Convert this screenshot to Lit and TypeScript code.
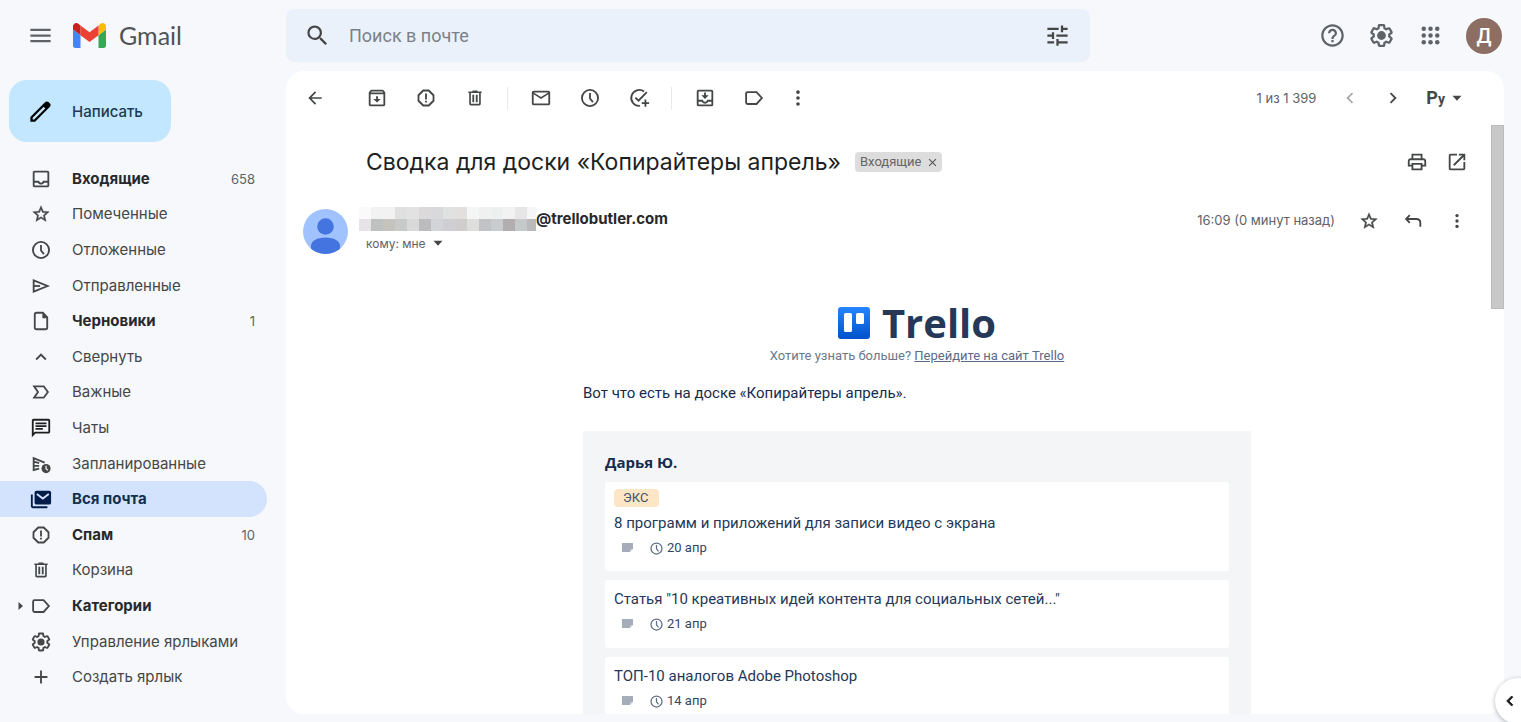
import { LitElement, html, svg, css, nothing, type TemplateResult, type SVGTemplateResult } from "lit";
import { customElement, state } from "lit/decorators.js";
import { classMap } from "lit/directives/class-map.js";

const line = (d: string, w = 2) => svg`<path d=${d} fill="none" stroke="currentColor" stroke-width=${w}></path>`;
const fill = (d: string) => svg`<path d=${d} fill="currentColor"></path>`;
const dot = (x: number, y: number, r: number) => svg`<circle cx=${x} cy=${y} r=${r} fill="currentColor"></circle>`;

const GEAR =
  "M13.85 22.25h-3.7c-.74 0-1.36-.54-1.45-1.27l-.27-1.89c-.27-.14-.53-.29-.79-.46l-1.8.72c-.7.26-1.47-.03-1.81-.65L2.2 15.53c-.35-.66-.2-1.44.36-1.88l1.53-1.19c-.01-.15-.02-.3-.02-.46 0-.15.01-.31.02-.46l-1.52-1.19c-.59-.45-.74-1.26-.37-1.88l1.85-3.19c.34-.62 1.11-.9 1.79-.63l1.81.73c.26-.17.52-.32.78-.46l.27-1.91c.09-.7.71-1.25 1.44-1.25h3.7c.74 0 1.36.54 1.45 1.27l.27 1.89c.27.14.53.29.79.46l1.8-.72c.71-.26 1.48.03 1.82.65l1.84 3.18c.36.66.2 1.44-.36 1.88l-1.52 1.19c.01.15.02.3.02.46s-.01.31-.02.46l1.52 1.19c.56.45.72 1.23.37 1.86l-1.86 3.22c-.34.62-1.11.9-1.8.63l-1.8-.72c-.26.17-.52.32-.78.46l-.27 1.91c-.1.68-.72 1.22-1.46 1.22zm-3.23-2h2.76l.37-2.55.53-.22c.44-.18.88-.44 1.34-.78l.45-.34 2.38.96 1.38-2.4-2.03-1.58.07-.56c.03-.26.06-.51.06-.78s-.03-.53-.06-.78l-.07-.56 2.03-1.58-1.39-2.4-2.39.96-.45-.35c-.42-.32-.87-.58-1.33-.77l-.52-.22-.37-2.55h-2.76l-.37 2.55-.53.21c-.44.19-.88.44-1.34.79l-.45.33-2.38-.95-1.39 2.39 2.03 1.58-.07.56a7 7 0 0 0-.06.79c0 .26.02.53.06.78l.07.56-2.03 1.58 1.38 2.4 2.39-.96.45.35c.43.33.86.58 1.33.77l.53.22z";
const STAR =
  "M22 9.24l-7.19-.62L12 2 9.19 8.63 2 9.24l5.46 4.73L5.82 21 12 17.27 18.18 21l-1.63-7.03L22 9.24zM12 15.4l-3.76 2.27 1-4.28-3.32-2.88 4.38-.38L12 6.1l1.71 4.04 4.38.38-3.32 2.88 1 4.28L12 15.4z";

const icons: Record<string, SVGTemplateResult> = {
  menu: fill("M3 18h18v-2H3v2zm0-5h18v-2H3v2zm0-7v2h18V6H3z"),
  search: fill("M15.5 14h-.79l-.28-.27A6.471 6.471 0 0 0 16 9.5 6.5 6.5 0 1 0 9.5 16c1.61 0 3.09-.59 4.23-1.57l.27.28v.79l5 4.99L20.49 19l-4.99-5zm-6 0C7.01 14 5 11.99 5 9.5S7.01 5 9.5 5 14 7.01 14 9.5 11.99 14 9.5 14z"),
  tune: fill("M3 17v2h6v-2H3zM3 5v2h10V5H3zm10 16v-2h8v-2h-8v-2h-2v6h2zM7 9v2H3v2h4v2h2V9H7zm14 4v-2H11v2h10zm-6-4h2V7h4V5h-4V3h-2v6z"),
  help: fill("M11 18h2v-2h-2v2zm1-16C6.48 2 2 6.48 2 12s4.48 10 10 10 10-4.48 10-10S17.52 2 12 2zm0 18c-4.41 0-8-3.59-8-8s3.59-8 8-8 8 3.59 8 8-3.59 8-8 8zm0-14c-2.21 0-4 1.79-4 4h2c0-1.1.9-2 2-2s2 .9 2 2c0 2-3 1.75-3 5h2c0-2.25 3-2.5 3-5 0-2.21-1.79-4-4-4z"),
  gear: svg`${fill(GEAR)}${dot(12, 12, 3.9)}`,
  apps: svg`${[6, 12, 18].map((y) => [6, 12, 18].map((x) => dot(x, y, 2)))}`,
  pencil: fill("M20.41 4.94l-1.35-1.35c-.78-.78-2.05-.78-2.83 0L3 16.82V21h4.18L20.41 7.77c.79-.78.79-2.05 0-2.83zm-14 14.12L5 19v-1.36l9.82-9.82 1.41 1.41-9.82 9.83z"),
  inbox: fill("M19 3H5c-1.1 0-2 .9-2 2v14c0 1.1.89 2 2 2h14c1.1 0 2-.9 2-2V5c0-1.1-.9-2-2-2zm0 16H5v-3h3.56c.69 1.19 1.97 2 3.45 2s2.75-.81 3.45-2H19v3zm0-5h-4.99c0 1.1-.9 2-2 2s-2-.9-2-2H5V5h14v9z"),
  star: svg`<path transform="translate(1.2 1.2) scale(.9)" d=${STAR} fill="currentColor" stroke="currentColor" stroke-width=".5"></path>`,
  clock: svg`<circle cx="12" cy="12" r="8.8" fill="none" stroke="currentColor" stroke-width="2"></circle>${line("M12 6.5v6l3.2 4")}`,
  send: svg`${line("M4 5.800v12.400L19.200 12z")}${line("M4 12h7")}`,
  draft: svg`${line("M14 3H7.200C6 3 5.200 3.800 5.200 5v14c0 1.200.8 2 2 2h9.600c1.200 0 2-.8 2-2V8z")}${fill("M13.500 3v6h6z")}`,
  up: fill("M12 8l-6 6 1.41 1.41L12 10.83l4.59 4.58L18 14z"),
  important: line("M4.500 5.800h10.500l4.500 6.200-4.500 6.200H4.500L8.700 12z"),
  chat: fill("M4 4h16v12H5.17L4 17.17V4m0-2c-1.1 0-1.99.9-1.99 2L2 22l4-4h14c1.1 0 2-.9 2-2V4c0-1.1-.9-2-2-2H4zm2 10h8v2H6v-2zm0-3h12v2H6V9zm0-3h12v2H6V6z"),
  scheduled: svg`${line("M10 17l-6 1.500V5.500l12 5M4 9.500l6 1.500M4 14h6")}${dot(17.5, 17, 5)}<path d="M17.500 14v3.200l2 1.600" fill="none" stroke="#f6f8fc" stroke-width="1.300"></path>`,
  allmail: svg`${fill("M3 7H1v13c0 1.100.9 2 2 2h16v-2H3z")}<rect x="5" y="3" width="18" height="15" rx="2" fill="currentColor"></rect><path d="M7.500 6.500l6.500 5 6.500-5" fill="none" stroke="#d3e3fd" stroke-width="2"></path>`,
  spam: svg`${line("M9 3.800h6L20.200 9v6L15 20.200H9L3.800 15V9z")}${fill("M11 7h2v6.500h-2zM11 15h2v2h-2z")}`,
  trash: svg`<g transform="translate(1.200 1.200) scale(.9)">${fill("M15 4V3H9v1H4v2h1v13c0 1.100.9 2 2 2h10c1.100 0 2-.9 2-2V6h1V4h-5zm2 15H7V6h10v13zM8.800 8h2.200v9H8.800zm4.200 0h2.200v9H13z")}</g>`,
  label: line("M5 5.500h9.800L20.600 12l-5.800 6.500H5c-.8 0-1.600-.6-1.600-1.500V7c0-.9.8-1.500 1.600-1.500z"),
  plus: fill("M19 13h-6v6h-2v-6H5v-2h6V5h2v6h6v2z"),
  back: fill("M20 11H7.830l5.590-5.590L12 4l-8 8 8 8 1.410-1.410L7.830 13H20v-2z"),
  archive: fill("M20.54 5.23l-1.39-1.68C18.88 3.21 18.47 3 18 3H6c-.47 0-.88.21-1.16.55L3.46 5.23C3.17 5.57 3 6.02 3 6.5V19c0 1.1.9 2 2 2h14c1.1 0 2-.9 2-2V6.5c0-.48-.17-.93-.46-1.27zM6.24 5h11.52l.83 1H5.42l.82-1zM5 19V8h14v11H5zm8-9h-2v3H8l4 4 4-4h-3v-3z"),
  mail: fill("M22 6c0-1.1-.9-2-2-2H4c-1.1 0-2 .9-2 2v12c0 1.1.9 2 2 2h16c1.1 0 2-.9 2-2V6zm-2 0l-8 5-8-5h16zm0 12H4V8l8 5 8-5v10z"),
  task: svg`${line("M17.500 5A8.700 8.700 0 1 0 13 20.600M8 11.500l3.500 3.500L20.500 5.500")}${line("M19 13.500v8M15 17.500h8")}`,
  move: svg`${line("M5 4h14c.6 0 1 .4 1 1v14c0 .6-.4 1-1 1H5c-.6 0-1-.4-1-1V5c0-.6.400-1 1-1zM4 15h5c.5 1.500 1.500 2.200 3 2.200s2.500-.7 3-2.200h5")}${fill("M11 6h2v3h3l-4 4-4-4h3z")}`,
  more: svg`${dot(12, 5.5, 2)}${dot(12, 12, 2)}${dot(12, 18.5, 2)}`,
  left: fill("M15.41 7.41L14 6l-6 6 6 6 1.41-1.41L10.830 12z"),
  right: fill("M8.59 16.590L10 18l6-6-6-6-1.410 1.410L13.170 12z"),
  print: fill("M19 8h-1V3H6v5H5c-1.66 0-3 1.34-3 3v6h4v4h12v-4h4v-6c0-1.66-1.34-3-3-3zM8 5h8v3H8V5zm8 12v2H8v-4h8v2zm2-2v-2H6v2H4v-4c0-.55.45-1 1-1h14c.55 0 1 .45 1 1v4h-2z"),
  open: fill("M19 19H5V5h7V3H5a2 2 0 0 0-2 2v14a2 2 0 0 0 2 2h14c1.1 0 2-.9 2-2v-7h-2v7zM14 3v2h3.59l-9.83 9.83 1.41 1.41L19 6.41V10h2V3h-7z"),
  reply: line("M8.500 5.500L4.500 9.800l4 4.200M4.500 9.800h11c2.800 0 4.500 1.700 4.500 4.500v4"),
  down: fill("M3 7.500h18l-9 10z"),
  caret: fill("M7 4v16l9-8z"),
  close: line("M3 3l18 18M21 3L3 21", 3),
};

const icon = (name: string, size: "s" | "m" | "l" | "xs" = "m"): TemplateResult =>
  html`<svg class="i ${size}" viewBox="0 0 24 24" aria-hidden="true">${icons[name]}</svg>`;

interface Folder { id: string; name: string; icon: string; count?: string; bold?: boolean; caret?: boolean; }

const folders: Folder[] = [
  { id: "inbox", name: "Входящие", icon: "inbox", count: "658", bold: true },
  { id: "starred", name: "Помеченные", icon: "star" },
  { id: "snoozed", name: "Отложенные", icon: "clock" },
  { id: "sent", name: "Отправленные", icon: "send" },
  { id: "drafts", name: "Черновики", icon: "draft", count: "1", bold: true },
  { id: "less", name: "Свернуть", icon: "up" },
  { id: "important", name: "Важные", icon: "important" },
  { id: "chats", name: "Чаты", icon: "chat" },
  { id: "scheduled", name: "Запланированные", icon: "scheduled" },
  { id: "all", name: "Вся почта", icon: "allmail" },
  { id: "spam", name: "Спам", icon: "spam", count: "10", bold: true },
  { id: "trash", name: "Корзина", icon: "trash" },
  { id: "categories", name: "Категории", icon: "label", bold: true, caret: true },
  { id: "manage", name: "Управление ярлыками", icon: "gear" },
  { id: "create", name: "Создать ярлык", icon: "plus" },
];

const cards = [
  { tag: "ЭКС", title: "8 программ и приложений для записи видео с экрана", date: "20 апр" },
  { title: "Статья \"10 креативных идей контента для социальных сетей...\"", date: "21 апр" },
  { title: "ТОП-10 аналогов Adobe Photoshop", date: "14 апр" },
];

const mosaic = [
  ["#fafafa", "#f2f2f2", "#f2f2f2", "#e0e0e0", "#e2e2e2", "#dbd9da", "#d9d9dc", "#e0e2e1", "#e3dfdf", "#f4f5f5", "#f0f0f1", "#eeefef", "#f2f2f2", "#e6e6e6", "#f6f6f6"],
  ["#e6e4e6", "#bfc1c0", "#c5c3bd", "#c8caca", "#d9d9d9", "#bcbbbd", "#d3d4da", "#cfcfd3", "#d0cecd", "#dededc", "#c2c3c6", "#c9cccc", "#b2adaf", "#c5c9c9", "#bababa"],
];

const base = css`
  :host { box-sizing: border-box; font-family: Inter, Roboto, sans-serif; color: #444746; }
  *, *::before { box-sizing: border-box; }
  button { font: inherit; color: inherit; background: none; border: 0; padding: 0; margin: 0; cursor: pointer;
    display: flex; align-items: center; justify-content: center; }
  .i { display: block; flex: none; }
  .xs { width: 12px; height: 12px; }
  .s { width: 20px; height: 20px; }
  .m { width: 22px; height: 22px; }
  .l { width: 27px; height: 27px; }
`;

@customElement("mail-header")
export class MailHeader extends LitElement {
  static styles = [base, css`
    :host { display: flex; align-items: center; height: 71px; padding-right: 19px; color: #5f6368; }
    .brand { flex: none; display: flex; align-items: center; width: 286px; padding-left: 27px; }
    .logo { display: flex; align-items: center; gap: 13px; margin-left: 19px; text-decoration: none;
      color: #505357; font: 25px/30px Lato, Roboto, sans-serif; }
    .logo span { padding-bottom: 2px; }
    .logo svg { width: 33px; height: 25px; }
    .search { flex: 0 1 804px; min-width: 0; display: flex; align-items: center; gap: 18px; height: 53px;
      padding: 0 19px 0 18px; border-radius: 8px; background: #eaf1fb; color: #444746; }
    .search input { flex: 1; min-width: 0; border: 0; padding: 0; background: none; outline: 0;
      font: 18px/24px Roboto, sans-serif; color: #202124; }
    .search input::placeholder { color: #7c8086; opacity: 1; }
    .tools { display: flex; align-items: center; margin-left: auto; }
    .tools button { width: 49px; height: 49px; }
    .tools .avatar { width: 36px; height: 36px; margin-left: 11px; border-radius: 50%; background: #8d6e63;
      color: #fff; font: 500 20px/36px Roboto, sans-serif; }
  `];

  render() {
    return html`
      <div class="brand">
        <button aria-label="Главное меню">${icon("menu", "l")}</button>
        <a class="logo" href="#">
          <svg viewBox="52 42 88 66" aria-hidden="true">
            <path fill="#4285f4" d="M58 108h14V74L52 59v43c0 3.32 2.69 6 6 6"></path>
            <path fill="#34a853" d="M120 108h14c3.32 0 6-2.69 6-6V59l-20 15"></path>
            <path fill="#fbbc04" d="M120 48v26l20-15v-8c0-7.42-8.47-11.65-14.4-7.2"></path>
            <path fill="#ea4335" d="M72 74V48l24 18 24-18v26L96 92"></path>
            <path fill="#c5221f" d="M52 51v8l20 15V48l-5.6-4.2c-5.94-4.45-14.4-.22-14.4 7.2"></path>
          </svg>
          <span>Gmail</span>
        </a>
      </div>
      <form class="search" role="search">
        <button type="button" aria-label="Найти">${icon("search", "l")}</button>
        <input type="text" aria-label="Поиск в почте" placeholder="Поиск в почте" />
        <button type="button" aria-label="Параметры поиска">${icon("tune", "l")}</button>
      </form>
      <div class="tools">
        <button aria-label="Справка">${icon("help", "l")}</button>
        <button aria-label="Настройки">${icon("gear", "l")}</button>
        <button aria-label="Приложения">${icon("apps", "l")}</button>
        <button class="avatar" aria-label="Аккаунт">Д</button>
      </div>`;
  }
}

@customElement("mail-sidebar")
export class MailSidebar extends LitElement {
  static styles = [base, css`
    :host { display: block; padding: 9px 19px 0 0; }
    .compose { height: 62px; margin: 0 0 19px 9px; padding: 0 28px 0 18px; gap: 18px; border-radius: 18px;
      background: #c2e7ff; color: #001d35; font-size: 15px; font-weight: 500; }
    .compose span { color: #1f3a50; }
    .compose svg { color: #000; }
    nav { display: grid; grid-auto-rows: 1fr; min-height: 534px; }
    a { display: grid; grid-template-columns: 30px 22px 1fr auto; align-items: center; padding-right: 12px;
      border-radius: 0 18px 18px 0; color: #444746; text-decoration: none; font-size: 15px; line-height: 20px; }
    .slot { display: flex; justify-content: flex-end; padding-right: 3px; }
    .name { padding-left: 20px; white-space: nowrap; }
    .count { font-size: 13px; font-weight: 400; color: #5f6368; }
    .bold { font-weight: 700; color: #27282b; }
    .bold svg { color: #444746; }
    .active { background: #d3e3fd; font-weight: 700; color: #12304d; }
    .active svg { color: #001d49; }
    .dark svg { color: #1f1f1f; }
  `];

  @state() private selected = "all";

  render() {
    return html`
      <button class="compose">${icon("pencil", "l")}<span>Написать</span></button>
      <nav aria-label="Папки">
        ${folders.map((f) => html`
          <a href="#${f.id}" class=${classMap({ bold: !!f.bold, active: f.id === this.selected, dark: f.id === "chats" })}
            @click=${() => (this.selected = f.id)}>
            <span class="slot">${f.caret ? icon("caret", "xs") : nothing}</span>
            ${icon(f.icon)}
            <span class="name">${f.name}</span>
            ${f.count ? html`<span class="count">${f.count}</span>` : nothing}
          </a>`)}
      </nav>`;
  }
}

@customElement("mail-toolbar")
export class MailToolbar extends LitElement {
  static styles = [base, css`
    :host { flex: none; display: flex; align-items: center; height: 54px; padding: 0 41px 0 9px; }
    button { width: 49px; height: 40px; }
    .back { width: 40px; margin-right: 17px; }
    .more { width: 40px; }
    hr { width: 1px; height: 23px; margin: 0 8px; border: 0; background: #e8eaed; }
    .page { margin-left: auto; padding-right: 12px; font-size: 13px; color: #5f6368; white-space: nowrap; }
    .nav { width: 43px; }
    .nav[disabled] { color: #a8aaac; }
    .input { width: auto; padding-left: 12px; gap: 6px; }
    .lang { font: 700 18px/24px Roboto, sans-serif; }
    .lang small { font-size: 14px; }
  `];

  render() {
    const b = (name: string, label: string, cls = "") =>
      html`<button class=${cls} aria-label=${label}>${icon(name, cls === "back" ? "s" : "m")}</button>`;
    return html`
      ${b("back", "Назад", "back")}
      ${b("archive", "Архивировать")}${b("spam", "В спам!")}${b("trash", "Удалить")}
      <hr />
      ${b("mail", "Отметить как непрочитанное")}${b("clock", "Отложить")}${b("task", "Добавить в задачи")}
      <hr />
      ${b("move", "Переместить")}${b("label", "Ярлыки")}${b("more", "Ещё", "more")}
      <span class="page">1 из 1 399</span>
      <button class="nav" disabled aria-label="Новее">${icon("left")}</button>
      <button class="nav" aria-label="Старее">${icon("right")}</button>
      <button class="input" aria-label="Способ ввода"><span class="lang">Р<small>у</small></span>${icon("down", "xs")}</button>`;
  }
}

@customElement("trello-digest")
export class TrelloDigest extends LitElement {
  static styles = [base, css`
    :host { display: block; max-width: 668px; margin: 0 auto; padding-top: 52px;
      font-family: Roboto, "Open Sans", sans-serif; color: #172b4d; }
    .brand { display: flex; align-items: center; justify-content: center; gap: 12px; height: 32px;
      font: 700 40px/32px "Open Sans", sans-serif; color: #253858; }
    .brand svg { width: 32px; height: 32px; }
    .more { margin: 7px 0 16px; text-align: center; font-size: 13px; line-height: 20px; color: #6b778c; }
    .more a { color: #5a6b87; }
    .intro { margin: 0 0 27px; font-size: 15px; line-height: 22px; }
    .board { padding: 20px 22px; background: #f4f5f7; display: flex; flex-direction: column; gap: 9px; }
    h2 { margin: 0; font: 700 15px/22px "Open Sans", sans-serif; }
    .card { min-height: 68px; padding: 7px 9px 13px; border-radius: 3px; background: #fff; }
    .tag { display: table; margin-bottom: 4px; padding: 0 11px 0 9px; border-radius: 4px; background: #fce6c6;
      font-size: 13px; line-height: 18px; color: #42526e; }
    h3 { margin: 0; font-weight: 400; font-size: 15px; line-height: 24px; color: #253858; }
    .meta { display: flex; align-items: center; margin-top: 3px; padding-left: 8px; font-size: 13px; line-height: 20px; color: #344563; }
    .note { width: 11px; height: 10px; margin-right: 16px; }
    .due { width: 15px; height: 15px; margin-right: 3px; color: #5e6c84; }
  `];

  render() {
    return html`
      <div class="brand">
        <svg viewBox="0 0 32 32" aria-hidden="true">
          <defs><linearGradient id="g" x1="0" y1="0" x2="0" y2="1">
            <stop offset="0" stop-color="#2684ff"></stop><stop offset="1" stop-color="#0052cc"></stop>
          </linearGradient></defs>
          <rect width="32" height="32" rx="3" fill="url(#g)"></rect>
          <rect x="6" y="6" width="8" height="19" rx="1.5" fill="#fff"></rect>
          <rect x="18" y="6" width="8" height="11" rx="1.5" fill="#fff"></rect>
        </svg>
        <span>Trello</span>
      </div>
      <p class="more">Хотите узнать больше? <a href="#trello">Перейдите на сайт Trello</a></p>
      <p class="intro">Вот что есть на доске «Копирайтеры апрель».</p>
      <section class="board">
        <h2>Дарья Ю.</h2>
        ${cards.map((c) => html`
          <article class="card">
            ${c.tag ? html`<span class="tag">${c.tag}</span>` : nothing}
            <h3>${c.title}</h3>
            <div class="meta">
              <svg class="note" viewBox="0 0 11 10" aria-hidden="true"><path fill="#a5adba" d="M0 0h11v6H8v3H0z"></path><path fill="#c1c7d0" d="M8 6h3L8 9z"></path></svg>
              <svg class="due" viewBox="0 0 24 24" aria-hidden="true">${icons.clock}</svg>
              <time>${c.date}</time>
            </div>
          </article>`)}
      </section>`;
  }
}

@customElement("mail-message")
export class MailMessage extends LitElement {
  static styles = [base, css`
    :host { flex: 1; min-height: 0; display: flex; overflow: hidden; }
    .body { flex: 1; min-width: 0; }
    button { width: 44px; height: 43px; }
    .subject { display: flex; align-items: center; height: 74px; padding: 0 14px 0 80px; }
    h1 { margin: 0; font-size: 23px; line-height: 28px; font-weight: 400; color: #1f1f1f; white-space: nowrap; }
    .chip { flex: none; display: flex; align-items: center; gap: 6px; height: 20px; margin: 0 auto 0 14px; padding: 0 5px;
      border-radius: 4px; background: #ddd; color: #666; font: 13px/20px Roboto, sans-serif; }
    .chip button { width: auto; height: auto; color: #555; }
    .chip svg { width: 9px; height: 9px; }
    .subject > button { width: 40px; }
    .from { display: flex; padding: 0 12px 0 17px; }
    .face { flex: none; width: 45px; height: 45px; margin: 10px 11px 0 0; }
    .who { margin-right: auto; padding-top: 8px; }
    .name { display: flex; align-items: center; height: 24px; font-size: 15px; font-weight: 700; color: #27282b; }
    .mosaic { width: 177px; height: 24px; }
    .name span { padding-bottom: 0; line-height: 24px; }
    .to { width: auto; height: 24px; padding-left: 7px; gap: 6px; font-size: 12px; color: #5f6368; }
    .to svg { color: #444746; }
    .time { line-height: 43px; margin-right: 12px; font-size: 13px; color: #5f6368; white-space: nowrap; }
    .email { padding: 0 23px 0 80px; }
    .bar { flex: none; width: 13px; }
    .thumb { height: 184px; background: #c8c8c8; border: 1px solid #bcbcbc; }
  `];

  render() {
    return html`
      <div class="body">
        <div class="subject">
          <h1>Сводка для доски «Копирайтеры апрель»</h1>
          <span class="chip">Входящие<button aria-label="Удалить ярлык">${icon("close", "xs")}</button></span>
          <button aria-label="Печать">${icon("print")}</button>
          <button aria-label="Открыть в новом окне">${icon("open")}</button>
        </div>
        <div class="from">
          <svg class="face" viewBox="0 0 45 45" aria-hidden="true">
            <defs><clipPath id="c"><circle cx="22.5" cy="22.5" r="22.5"></circle></clipPath></defs>
            <g clip-path="url(#c)">
              <rect width="45" height="45" fill="#a0c3ff"></rect>
              <circle cx="22.500" cy="17.500" r="8.300" fill="#4374e0"></circle>
              <path d="M8 45v-8c0-5 6-8.500 14.500-8.500S37 32 37 37v8z" fill="#4374e0"></path>
            </g>
          </svg>
          <div class="who">
            <div class="name">
              <svg class="mosaic" viewBox="0 0 177 24" shape-rendering="crispEdges" aria-hidden="true">
                ${mosaic.map((row, y) => row.map((c, x) => svg`<rect x=${x * 12} y=${y * 12} width="12" height="12" fill=${c}></rect>`))}
              </svg>
              <span>@trellobutler.com</span>
            </div>
            <button class="to">кому: мне ${icon("down", "xs")}</button>
          </div>
          <span class="time">16:09 (0 минут назад)</span>
          <button aria-label="Пометить">${icon("star")}</button>
          <button aria-label="Ответить">${icon("reply")}</button>
          <button aria-label="Ещё">${icon("more", "s")}</button>
        </div>
        <div class="email"><trello-digest></trello-digest></div>
      </div>
      <div class="bar" aria-hidden="true"><div class="thumb"></div></div>`;
  }
}

@customElement("app-root")
export class AppRoot extends LitElement {
  static styles = [base, css`
    :host { position: relative; display: grid; grid-template: auto minmax(0, 1fr) / 286px minmax(0, 1fr);
      height: 100vh; overflow: hidden; background: #f6f8fc; }
    mail-header { grid-column: 1 / -1; }
    main { display: flex; flex-direction: column; min-height: 0; margin: 0 17px 8px 0; border-radius: 18px;
      background: #fff; overflow: hidden; }
    .panel { position: absolute; right: -20px; bottom: -2px; width: 46px; height: 46px; border-radius: 50%;
      background: #fff; color: #1f1f1f; box-shadow: 0 1px 4px rgba(60, 64, 67, 0.4); justify-content: flex-start; padding-left: 5px; }
    .panel path { stroke: currentColor; stroke-width: 1; }
  `];

  render() {
    return html`
      <mail-header></mail-header>
      <mail-sidebar></mail-sidebar>
      <main>
        <mail-toolbar></mail-toolbar>
        <mail-message></mail-message>
      </main>
      <button class="panel" aria-label="Показать боковую панель">${icon("left", "s")}</button>`;
  }
}
